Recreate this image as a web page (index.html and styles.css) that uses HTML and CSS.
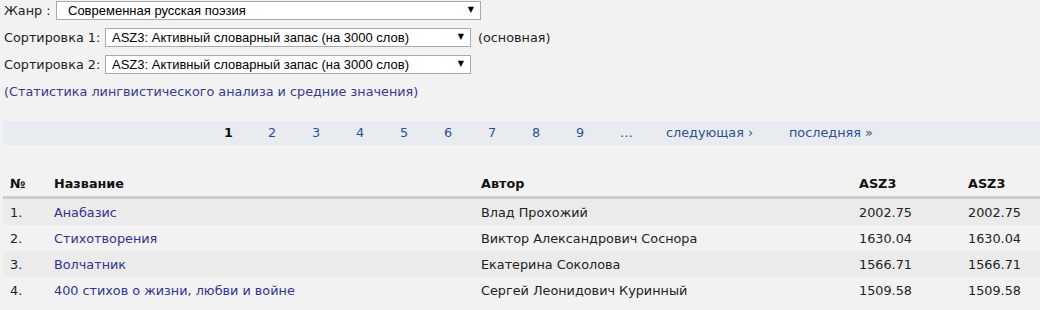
FILE: index.html
```html
<!DOCTYPE html>
<html>
	<head>
		<meta charset="UTF-8">
		<title>Современная русская поэзия</title>
		<link rel="stylesheet" href="styles.css">
	</head>
	<body>
		<form class="filters" action="" method="get">
			<div class="line"><label for="genre" class="lbl-genre">Жанр :</label><span class="sel sel-genre"><select id="genre"><option>Современная русская поэзия</option></select></span></div>
			<div class="line"><label for="sort1">Сортировка 1:</label><span class="sel"><select id="sort1"><option>ASZ3: Активный словарный запас (на 3000 слов)</option></select></span><span class="note">(основная)</span></div>
			<div class="line"><label for="sort2">Сортировка 2:</label><span class="sel"><select id="sort2"><option>ASZ3: Активный словарный запас (на 3000 слов)</option></select></span></div>
			<div class="line"><a class="stat" href="">(Статистика лингвистического анализа и средние значения)</a></div>
		</form>

		<div class="pager">
			<ul>
				<li class="current">1</li>
				<li><a href="">2</a></li>
				<li><a href="">3</a></li>
				<li><a href="">4</a></li>
				<li><a href="">5</a></li>
				<li><a href="">6</a></li>
				<li><a href="">7</a></li>
				<li><a href="">8</a></li>
				<li><a href="">9</a></li>
				<li class="dots">…</li>
				<li class="next"><a href="">следующая ›</a></li>
				<li class="last"><a href="">последняя »</a></li>
			</ul>
		</div>

		<table class="list">
			<thead>
				<tr><th class="c-num">№</th><th class="c-title">Название</th><th class="c-author">Автор</th><th class="c-v1">ASZ3</th><th>ASZ3</th></tr>
			</thead>
			<tbody>
				<tr class="odd"><td>1.</td><td><a href="">Анабазис</a></td><td>Влад Прохожий</td><td>2002.75</td><td>2002.75</td></tr>
				<tr><td>2.</td><td><a href="">Стихотворения</a></td><td>Виктор Александрович Соснора</td><td>1630.04</td><td>1630.04</td></tr>
				<tr class="odd"><td>3.</td><td><a href="">Волчатник</a></td><td>Екатерина Соколова</td><td>1566.71</td><td>1566.71</td></tr>
				<tr><td>4.</td><td><a href="">400 стихов о жизни, любви и войне</a></td><td>Сергей Леонидович Куринный</td><td>1509.58</td><td>1509.58</td></tr>
			</tbody>
		</table>
	</body>
</html>
```

FILE: styles.css
```css
body{
	margin: 0;
	padding: 1px 0 0 3px;
	background: #f2f2f2;
	color: #222;
	font: 12.8px/1.2 "DejaVu Sans", Verdana, sans-serif;
}
a{
	text-decoration: none;
	color: #33338f;
}
.filters .line{
	display: flex;
	align-items: center;
	height: 27px;
	padding-left: 1px;
}
.filters .line:first-child{
	margin-top: -4px;
}
.filters label{
	display: inline-block;
	width: 101px;
}
.filters label.lbl-genre{
	width: 52px;
}
.sel{
	position: relative;
	display: inline-block;
}
.sel select{
	-webkit-appearance: none;
	appearance: none;
	width: 366px;
	height: 19px;
	padding: 0 0 0 6px;
	border: 1px solid #a9a9a9;
	border-radius: 0;
	background: #fff;
	color: #000;
	font: 13px "Liberation Sans", Arial, sans-serif;
}
.sel-genre select{
	width: 425px;
	padding-left: 11px;
}
.sel::after{
	content: "▼";
	position: absolute;
	right: 7px;
	top: 4px;
	font-size: 8px;
	color: #000;
	pointer-events: none;
}
.note{
	margin-left: 7px;
}
.stat{
	color: #3a3a8c;
}
.pager{
	margin-top: 16px;
	height: 24px;
	background: #e8ecf0;
}
.pager ul{
	display: flex;
	align-items: center;
	height: 24px;
	margin: 0;
	padding: 0 0 0 221px;
	list-style: none;
	white-space: nowrap;
}
.pager li{
	width: 44px;
}
.pager li a{
	color: #2f4f8f;
}
.pager li.current{
	font-weight: bold;
	color: #111;
}
.pager li.dots{
	width: 46px;
	color: #2f4f8f;
}
.pager li.next{
	width: 123px;
}
.pager li.last{
	width: auto;
}
.list{
	width: 1037px;
	margin-top: 27px;
	border-collapse: collapse;
}
.list th{
	text-align: left;
	font-weight: bold;
	padding: 4px 7px 5px;
	height: 15px;
	border-bottom: 3px solid #cfcfcf;
	color: #111;
}
.list td{
	padding: 0 7px;
	height: 26px;
}
.list tr.odd td{
	background: #ebebeb;
}
.c-num{ width: 30px; }
.c-title{ width: 413px; }
.c-author{ width: 364px; }
.c-v1{ width: 95px; }
```
